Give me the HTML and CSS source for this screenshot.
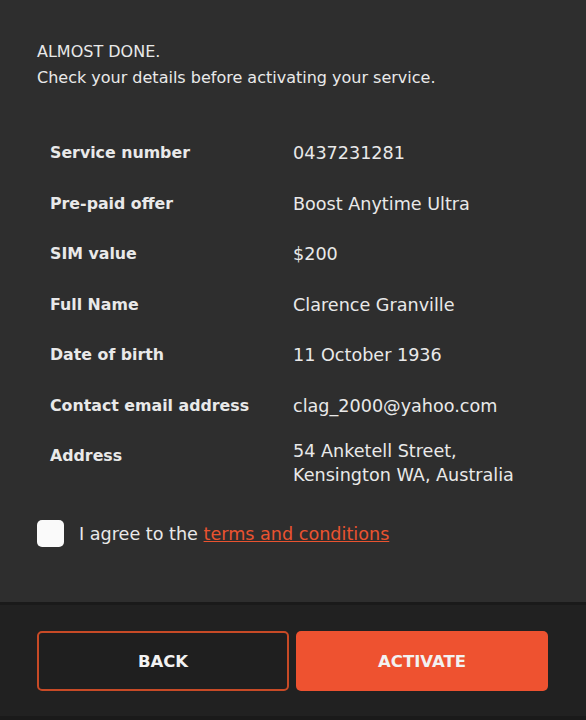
FILE: index.html
```html
<!DOCTYPE html>
<html lang="en">
<head>
<meta charset="utf-8">
<title>Activate service</title>
<link rel="stylesheet" href="styles.css">
</head>
<body>
<div class="page">
  <main class="content">
    <p class="intro">ALMOST DONE.<br>Check your details before activating your service.</p>
    <dl class="details">
      <div class="row"><dt>Service number</dt><dd>0437231281</dd></div>
      <div class="row"><dt>Pre-paid offer</dt><dd>Boost Anytime Ultra</dd></div>
      <div class="row"><dt>SIM value</dt><dd>$200</dd></div>
      <div class="row"><dt>Full Name</dt><dd>Clarence Granville</dd></div>
      <div class="row"><dt>Date of birth</dt><dd>11 October 1936</dd></div>
      <div class="row"><dt>Contact email address</dt><dd>clag_2000@yahoo.com</dd></div>
      <div class="row row-addr"><dt>Address</dt><dd>54 Anketell Street,<br>Kensington WA, Australia</dd></div>
    </dl>
    <label class="agree"><span class="box"></span><span>I agree to the <a href="#" class="link">terms and conditions</a></span></label>
  </main>
  <footer class="footer">
    <button class="btn btn-back">BACK</button>
    <button class="btn btn-activate">ACTIVATE</button>
  </footer>
</div>
</body>
</html>
```
FILE: styles.css
```css
html, body { margin: 0; padding: 0; }
body {
  background: #2e2e2e;
  font-family: "DejaVu Sans", "Open Sans", sans-serif;
  color: #e9e9e9;
}
.page { width: 586px; height: 720px; display: flex; flex-direction: column; }
.content { flex: 1; padding: 39px 37px 0; }
.intro { margin: 0; font-size: 16px; line-height: 26px; }
.details { margin: 50px 0 0; padding: 0 0 0 13px; }
.row { display: flex; align-items: flex-start; height: 50.5px; }
.row dt { width: 243px; font-weight: 600; font-size: 15.8px; line-height: 24px; }
.row dd { margin: 0; font-size: 17.6px; line-height: 24px; }
.row-addr { height: 62px; }
.row-addr dd { margin-top: -5px; }
.agree { display: flex; align-items: center; gap: 15px; margin-top: 14px; font-size: 17.6px; }
.box { width: 27px; height: 27px; background: #fafafa; border-radius: 5px; }
.link { color: #ea5330; text-decoration: underline; }
.footer {
  background: #212121;
  border-top: 3px solid #1a1a1a;
  border-bottom: 4px solid #1a1a1a;
  display: flex; gap: 7px;
  padding: 26px 38px 0 37px;
  box-sizing: border-box;
  flex: 0 0 118px;
}
.btn {
  width: 252px; height: 60px; border-radius: 5px;
  font-family: inherit; font-size: 16.5px; font-weight: 600; color: #f2f2f2;
  cursor: pointer;
}
.btn-back { background: #1f1f1f; border: 2px solid #c84a26; }
.btn-activate { background: #ee5230; border: none; }
```
